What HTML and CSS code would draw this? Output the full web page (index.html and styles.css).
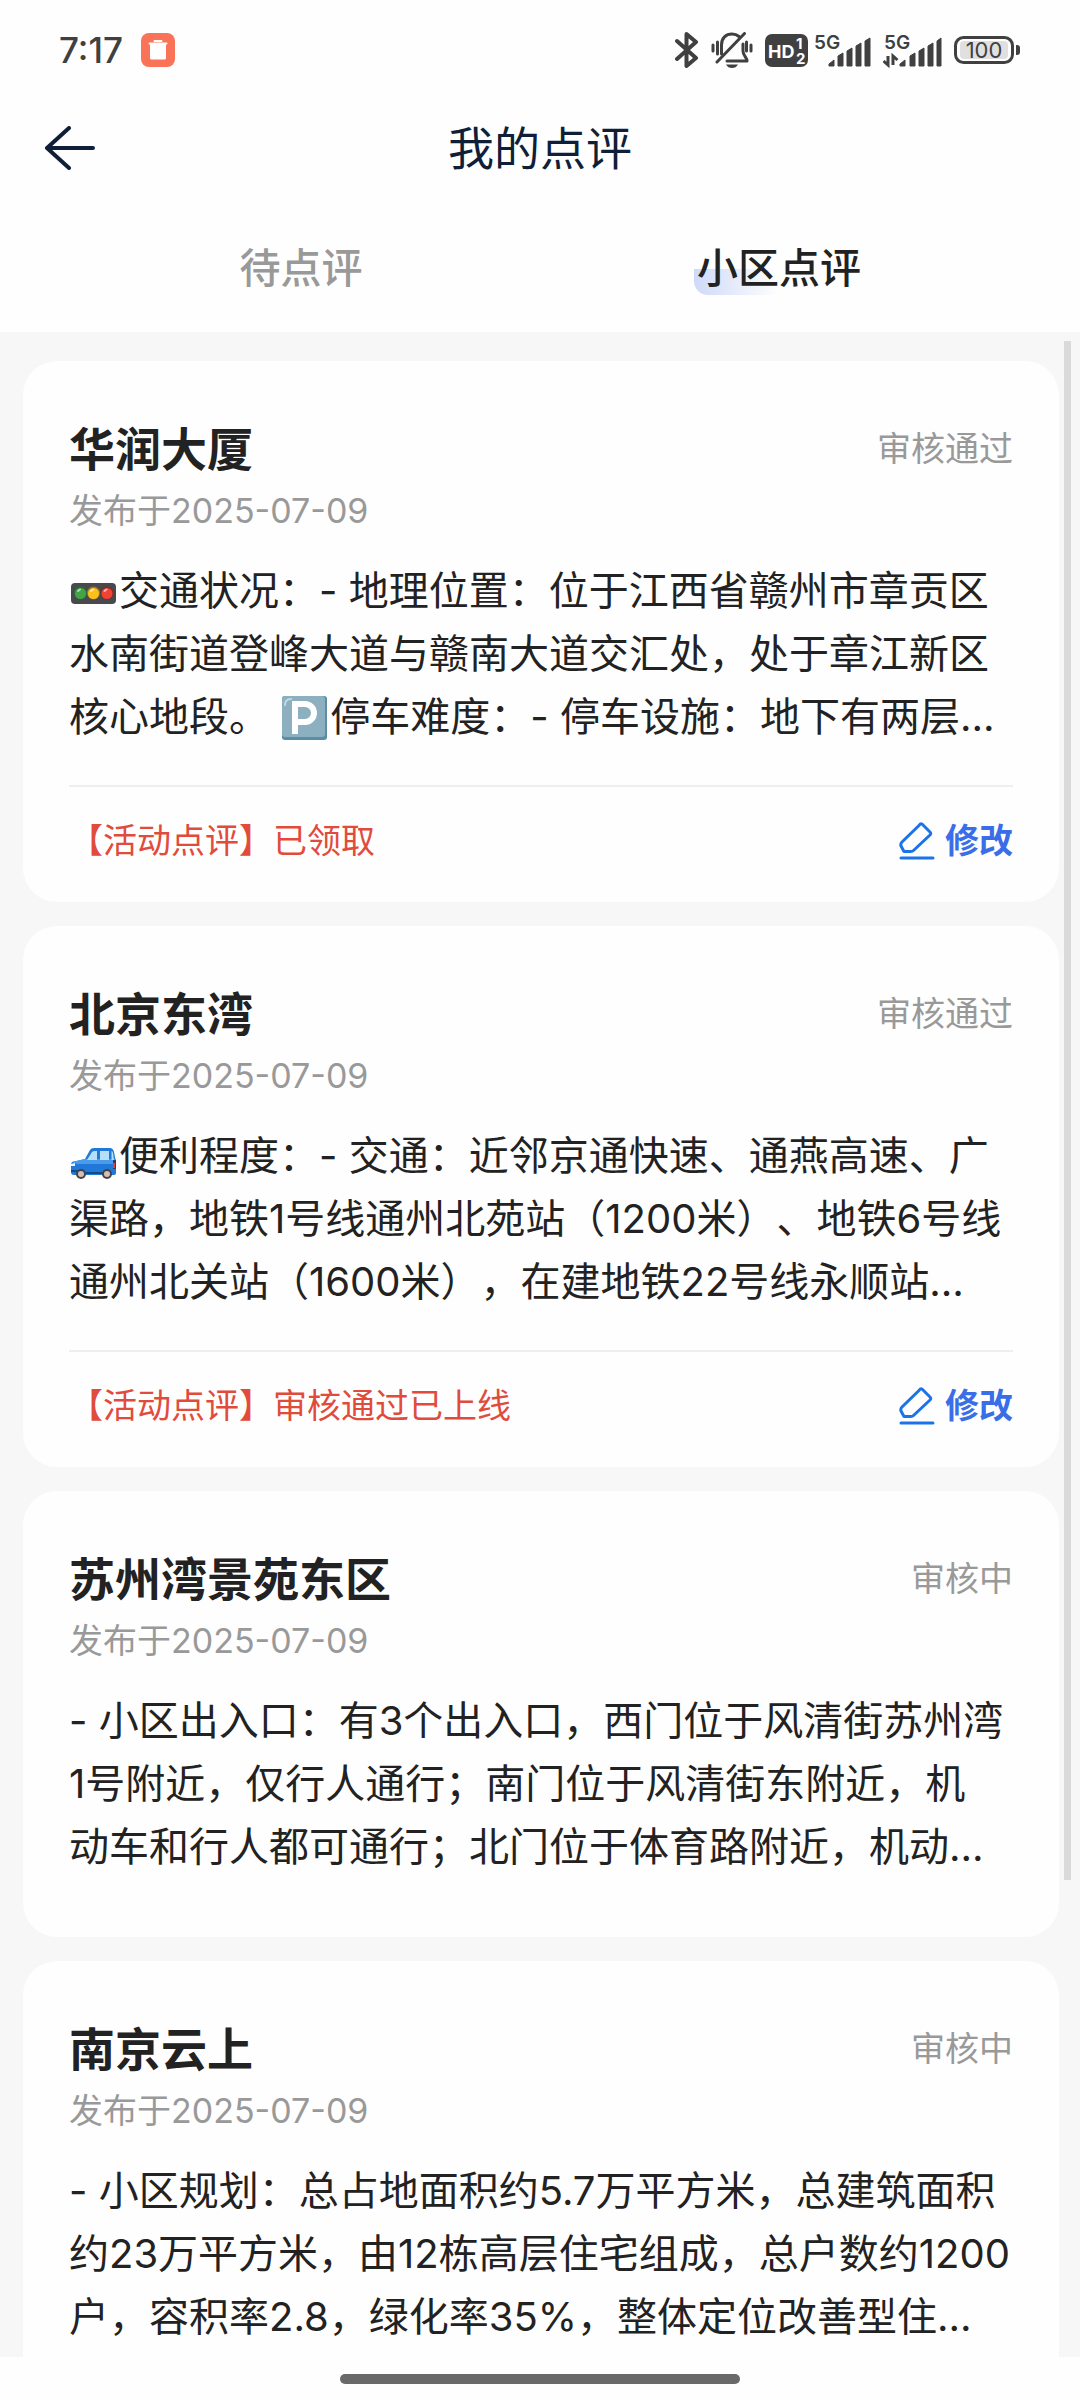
FILE: index.html
```html
<!DOCTYPE html>
<html lang="zh-CN">

<head>
	<meta charset="utf-8">
	<meta name="viewport" content="width=device-width, initial-scale=1">
	<title>我的点评</title>
	<link rel="stylesheet" href="styles.css">
</head>

<body>
	<div class="statusbar">
		<span class="clock">7:17</span>
		<svg class="app-badge" width="34" height="34" viewBox="0 0 34 34">
			<rect width="34" height="34" rx="8" fill="#fa7258" />
			<path d="M8.500 10.500h17M13.500 8h7" stroke="#fff" stroke-width="2" stroke-linecap="round" />
			<path d="M9 11h16v14a1.500 1.500 0 0 1-1.500 1.500h-13A1.500 1.500 0 0 1 9 25z" fill="#fff" />
		</svg>
		<div class="indicators">
			<svg width="24" height="36" viewBox="0 0 24 36" fill="none" stroke="#404040" stroke-width="4" stroke-linejoin="round" stroke-linecap="round">
				<path d="M2 9l19 17-9.500 8V2L21 10 2 27" />
			</svg>
			<svg width="42" height="36" viewBox="0 0 42 36" fill="none" stroke="#404040" stroke-width="3" stroke-linecap="round">
				<path d="M10.500 22V13C10.500 6 15 2 21 2c3 0 5 .8 7 2.500" />
				<path d="M32 12v7c0 5 4 6 4 10H16" stroke-linejoin="round" />
				<path d="M33.500 1.500L6 30" />
				<path d="M2 13v6M6.500 10v12M40 13v6M35.500 10v9" />
				<path d="M15 32.500h12q-2 3.500-6 3.500t-6-3.500z" fill="#404040" stroke="none" />
			</svg>
			<div class="network">
				<svg width="43" height="33" viewBox="0 0 43 33">
					<rect width="43" height="33" rx="7" fill="#404040" />
					<text x="3" y="24" class="hd">HD</text>
					<text x="31" y="15" class="sim">1</text>
					<text x="31" y="30" class="sim">2</text>
				</svg>
				<svg width="57" height="42" viewBox="0 -5 57 42">
					<text x="0" y="15" class="gen">5G</text>
					<path d="M15 32v-2l5-4v6zM24 32V22l5-3v13zM33 32V17l5-3v18zM42 32V12l5-3v23zM51 32V7l5-3v28z" fill="#404040" stroke="#404040" />
				</svg>
			</div>
			<svg width="59" height="42" viewBox="0 -5 59 42">
				<text x="1" y="15" class="gen">5G</text>
				<path d="M17 32v-2l5-4v6zM27 32V22l5-3v13zM36 32V17l5-3v18zM45 32V12l5-3v23zM54 32V7l4-3v28z" fill="#404040" stroke="#404040" />
				<path d="M5 22v9l-4.500-4M10 31v-9l4.500 4" fill="none" stroke="#404040" stroke-width="3" />
			</svg>
			<svg width="67" height="28" viewBox="0 0 67 28">
				<rect x="1.500" y="1.500" width="57" height="25" rx="8" fill="#fff" stroke="#404040" stroke-width="3" />
				<rect x="6" y="5" width="48" height="18" rx="4" fill="#e0e0e0" />
				<path d="M62 9h1a3 3 0 0 1 3 3v4a3 3 0 0 1-3 3h-1z" fill="#404040" />
				<text x="30" y="22" class="level">100</text>
			</svg>
		</div>
	</div>

	<header class="navbar">
		<button class="back" type="button" aria-label="返回">
			<svg width="52" height="44" viewBox="0 0 52 44" fill="none" stroke="#0f1f38" stroke-width="4" stroke-linecap="round" stroke-linejoin="round">
				<path d="M25 2L3 22l22 20M3 22h46" />
			</svg>
		</button>
		<h1>我的点评</h1>
	</header>

	<nav class="tabs">
		<a href="#pending" class="tab">待点评</a>
		<a href="#community" class="tab active"><span>小区点评</span></a>
	</nav>

	<main class="list">
		<article class="card">
			<div class="card-head">
				<h2>华润大厦</h2>
				<span class="state">审核通过</span>
			</div>
			<p class="date">发布于2025-07-09</p>
			<p class="content">
				<svg class="emoji" width="50" height="40" viewBox="0 5 50 40" role="img" aria-label="红绿灯">
					<rect x="2" y="13" width="45" height="21" rx="4" fill="#47494d" />
					<circle cx="11.500" cy="23" r="6.500" fill="#2c6b34" />
					<circle cx="11.500" cy="23.500" r="5.500" fill="#43a447" />
					<circle cx="24.500" cy="23" r="6.500" fill="#a8761c" />
					<circle cx="24.500" cy="23.500" r="5.500" fill="#fcc21b" />
					<circle cx="38" cy="23" r="6.500" fill="#8e2620" />
					<circle cx="38" cy="23.500" r="5.500" fill="#ef4335" />
					<path d="M9 21l2-1.500M22 21l2-1.500M35.500 21l2-1.500" stroke="#fff" stroke-width="2" stroke-opacity=".6" stroke-linecap="round" />
				</svg>交通状况：- 地理位置：位于江西省赣州市章贡区<br>
				水南街道登峰大道与赣南大道交汇处，处于章江新区<br>
				核心地段。 <svg class="emoji" width="50" height="46" viewBox="0 0 50 46" role="img" aria-label="停车">
					<rect x="2" y="1" width="45" height="44" rx="3" fill="#5b8da3" />
					<rect x="2" y="1" width="43" height="41" rx="3" fill="#8db0c0" />
					<path d="M5 10q0-6 6-6" fill="none" stroke="#c3d9e2" stroke-width="2" stroke-linecap="round" />
					<path d="M15 39V9h10a8.500 8.500 0 0 1 0 18H15" fill="none" stroke="#fff" stroke-width="6" />
				</svg>停车难度：- 停车设施：地下有两层…
			</p>
			<footer class="card-foot">
				<span class="activity">【活动点评】已领取</span>
				<button class="edit" type="button">
					<svg width="36" height="38" viewBox="0 0 36 38" fill="none" stroke="#1a73e8" stroke-width="3" stroke-linejoin="round" stroke-linecap="round">
						<path d="M23 2l8 8c1 1 1 2 0 3L14.500 28.500c-1 1-2 1-3 1H5L2 24c-.5-1.500 0-3 1-4L20 3.500c1-1.500 2-2 3-1.500z" />
						<path d="M2 36h32" />
					</svg>
					修改
				</button>
			</footer>
		</article>

		<article class="card">
			<div class="card-head">
				<h2>北京东湾</h2>
				<span class="state">审核通过</span>
			</div>
			<p class="date">发布于2025-07-09</p>
			<p class="content">
				<svg class="emoji" width="50" height="40" viewBox="0 -4 50 40" role="img" aria-label="汽车">
					<path d="M3 18l13-3 5-9q1-2 4-2h16q3 0 4 4l2 10v11q0 2-3 2H5q-3 0-3-3v-6q0-3 1-4z" fill="#2079d8" />
					<path d="M3 18l13-3h31v5H8z" fill="#4a9bea" />
					<path d="M18 16l5-8q1-1 3-1h2v9zM31 7h9v9h-9zM42.500 7q1 0 1.500 2l1 7h-2.500z" fill="#b5dff8" />
					<path d="M44 16h3v9h-3z" fill="#4c3450" />
					<path d="M44 19h2v5h-2z" fill="#ec3b3b" />
					<path d="M2 20l4-1v3H2z" fill="#e8f5fd" />
					<path d="M2 27h10M17 29h19" stroke="#174a83" stroke-width="2" />
					<circle cx="12" cy="30" r="5" fill="#42434a" />
					<circle cx="12" cy="30" r="3" fill="#d6beb3" />
					<circle cx="38" cy="30" r="5" fill="#42434a" />
					<circle cx="38" cy="30" r="3" fill="#d6beb3" />
				</svg>便利程度：- 交通：近邻京通快速、通燕高速、广<br>
				渠路，地铁1号线通州北苑站（1200米）、地铁6号线<br>
				通州北关站（1600米），在建地铁22号线永顺站…
			</p>
			<footer class="card-foot">
				<span class="activity">【活动点评】审核通过已上线</span>
				<button class="edit" type="button">
					<svg width="36" height="38" viewBox="0 0 36 38" fill="none" stroke="#1a73e8" stroke-width="3" stroke-linejoin="round" stroke-linecap="round">
						<path d="M23 2l8 8c1 1 1 2 0 3L14.500 28.500c-1 1-2 1-3 1H5L2 24c-.5-1.500 0-3 1-4L20 3.500c1-1.500 2-2 3-1.500z" />
						<path d="M2 36h32" />
					</svg>
					修改
				</button>
			</footer>
		</article>

		<article class="card no-foot">
			<div class="card-head">
				<h2>苏州湾景苑东区</h2>
				<span class="state">审核中</span>
			</div>
			<p class="date">发布于2025-07-09</p>
			<p class="content">
				- 小区出入口：有3个出入口，西门位于风清街苏州湾<br>
				1号附近，仅行人通行；南门位于风清街东附近，机<br>
				动车和行人都可通行；北门位于体育路附近，机动…
			</p>
		</article>

		<article class="card no-foot">
			<div class="card-head">
				<h2>南京云上</h2>
				<span class="state">审核中</span>
			</div>
			<p class="date">发布于2025-07-09</p>
			<p class="content">
				- 小区规划：总占地面积约5.7万平方米，总建筑面积<br>
				约23万平方米，由12栋高层住宅组成，总户数约1200<br>
				户，容积率2.8，绿化率35%，整体定位改善型住…
			</p>
		</article>
		<div class="scrollbar"></div>
	</main>

	<div class="home-area">
		<div class="home-bar"></div>
	</div>
</body>

</html>
```

FILE: styles.css
```css
* {
	box-sizing: border-box;
}

:root {
	--ink: #222;
	--muted: #999;
	--system: #404040;
}

body {
	margin: 0;
	height: 100vh;
	display: flex;
	flex-direction: column;
	background-color: #fefefe;
	color: var(--ink);
	font-family: Inter, "Noto Sans CJK SC", sans-serif;
	text-spacing-trim: space-all;
}

h1,
h2,
p {
	margin: 0;
}

button {
	padding: 0;
	border: none;
	background: none;
	font: inherit;
	color: inherit;
}

svg {
	display: block;
	flex-shrink: 0;
}

/* system status bar */
.statusbar {
	height: 100px;
	padding: 0 59px;
	display: flex;
	align-items: center;
	flex-shrink: 0;
	color: var(--system);
}

.clock {
	font-size: 35px;
	font-weight: 500;
}

.app-badge {
	margin-left: 18px;
}

.indicators {
	margin-left: auto;
	display: flex;
	align-items: center;
	gap: 12px;
}

.network {
	display: flex;
	align-items: center;
	gap: 6px;
}

.hd,
.sim {
	fill: #fff;
	font-weight: 700;
}

.hd {
	font-size: 18px;
}

.sim {
	font-size: 15px;
}

.gen {
	fill: var(--system);
	font-size: 19px;
	font-weight: 600;
}

.level {
	fill: var(--system);
	font-size: 22px;
	text-anchor: middle;
}

/* title and tabs */
.navbar {
	height: 96px;
	padding: 0 44px;
	display: grid;
	grid-template-columns: 1fr auto 1fr;
	align-items: center;
	flex-shrink: 0;
}

.back {
	justify-self: start;
}

.navbar h1 {
	color: #0f1f38;
	font-size: 46px;
	font-weight: 400;
	line-height: 64px;
}

.tabs {
	height: 136px;
	padding: 8px 62px 0;
	display: grid;
	grid-template-columns: 1fr 1fr;
	align-items: center;
	flex-shrink: 0;
}

.tab {
	color: var(--muted);
	font-size: 41px;
	font-weight: 500;
	line-height: 54px;
	text-align: center;
	text-decoration: none;
}

.tab.active {
	color: var(--ink);
}

.tab.active span {
	display: inline-block;
	padding: 0 3px;
	background: linear-gradient(to right, #cfdaf8, #fefefe) no-repeat left bottom / 84px 26px;
	border-bottom-left-radius: 14px;
}

/* review list */
.list {
	position: relative;
	flex: 1;
	min-height: 0;
	overflow: hidden;
	padding: 29px 21px 0 23px;
	display: flex;
	flex-direction: column;
	gap: 24px;
	background-color: #f7f7f7;
}

.card {
	flex-shrink: 0;
	padding: 56px 46px 37px;
	border-radius: 34px;
	background-color: #fefefe;
}

.card.no-foot {
	padding-bottom: 59px;
}

.card-head {
	display: flex;
	justify-content: space-between;
	align-items: center;
}

.card-head h2 {
	font-size: 46px;
	font-weight: 700;
	line-height: 64px;
}

.state,
.date,
.card-foot {
	font-size: 34px;
	line-height: 48px;
}

.state,
.date {
	color: var(--muted);
}

.date {
	margin-top: 6px;
}

.content {
	margin-top: 24px;
	font-size: 40px;
	line-height: 63px;
	white-space: nowrap;
}

.emoji {
	display: inline-block;
	vertical-align: -10px;
}

.card-foot {
	margin-top: 37px;
	padding-top: 30px;
	display: flex;
	justify-content: space-between;
	border-top: 2px solid #eee;
}

.activity {
	color: #e14b3c;
}

.edit {
	display: flex;
	align-items: center;
	gap: 10px;
	color: #3a6ee8;
	font-weight: 700;
}

.scrollbar {
	position: absolute;
	top: 9px;
	right: 9px;
	width: 7px;
	height: 76%;
	background-color: #dadada;
}

/* gesture bar */
.home-area {
	height: 43px;
	padding-top: 17px;
	flex-shrink: 0;
}

.home-bar {
	width: 37%;
	height: 10px;
	margin: 0 auto;
	border-radius: 5px;
	background-color: #696969;
}
```
